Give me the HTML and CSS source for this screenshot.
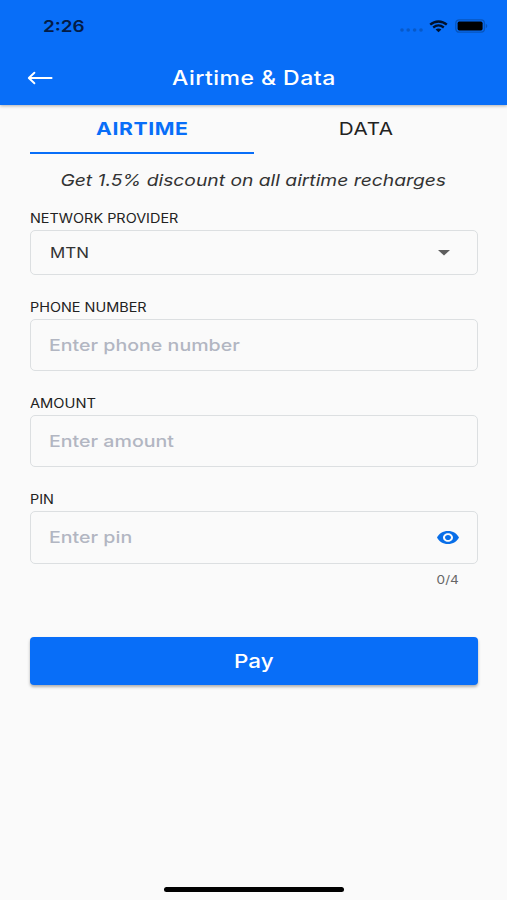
FILE: index.html
```html
<!DOCTYPE html>
<html lang="en">
<head>
<meta charset="utf-8">
<title>Airtime &amp; Data</title>
<link rel="stylesheet" href="styles.css">
</head>
<body>
<div class="screen">
  <header class="header">
    <div class="status">
      <span class="txt time">2:26</span>
      <div class="status-icons">
        <svg class="signal" width="24" height="4" viewBox="0 0 24 4"><circle cx="2" cy="2" r="1.8"/><circle cx="8.2" cy="2" r="1.8"/><circle cx="14.6" cy="2" r="1.8"/><circle cx="21" cy="2" r="1.8"/></svg>
        <svg class="wifi" width="19" height="13" viewBox="0 0 19 13"><path d="M1.2 4.7C6 .4 13 .4 17.8 4.7M4.2 7.5c3.2-2.6 7.4-2.6 10.6 0"/><path class="dot" d="M6.6 9.4c1.7-1.3 4.1-1.3 5.8 0L9.5 12.2z"/></svg>
        <svg class="battery" width="33" height="14" viewBox="0 0 33 14"><rect class="shell" x=".8" y=".8" width="28.6" height="12.4" rx="3.4"/><rect x="2.6" y="2.6" width="25" height="8.8" rx="1.6"/><path class="cap" d="M30.8 4.8c2 .8 2 3.6 0 4.4z"/></svg>
      </div>
    </div>
    <div class="appbar">
      <svg class="back" width="26" height="14" viewBox="0 0 26 14"><path d="M7.4 1.7 1.8 7 7.4 12.3M2 7H24.6"/></svg>
      <h1 class="txt title">Airtime &amp; Data</h1>
    </div>
  </header>
  <main class="content">
    <nav class="tabs">
      <div class="tab active"><span class="txt">AIRTIME</span></div>
      <div class="tab"><span class="txt">DATA</span></div>
    </nav>
    <p class="promo"><span class="txt">Get 1.5% discount on all airtime recharges</span></p>
    <div class="label"><span class="txt">NETWORK PROVIDER</span></div>
    <div class="field select"><span class="txt value">MTN</span>
      <svg class="caret" width="12" height="6" viewBox="0 0 12 6"><path d="M0 0h12L6 5.6z"/></svg>
    </div>
    <div class="label"><span class="txt">PHONE NUMBER</span></div>
    <div class="field"><span class="txt hint">Enter phone number</span></div>
    <div class="label"><span class="txt amount">AMOUNT</span></div>
    <div class="field"><span class="txt hint">Enter amount</span></div>
    <div class="label"><span class="txt">PIN</span></div>
    <div class="field"><span class="txt hint">Enter pin</span>
      <svg class="eye" width="22" height="13" viewBox="1 4.5 22 15" preserveAspectRatio="none"><path d="M12 4.5C7 4.5 2.73 7.61 1 12c1.73 4.39 6 7.5 11 7.5s9.27-3.11 11-7.5c-1.73-4.39-6-7.5-11-7.5zM12 17c-2.76 0-5-2.24-5-5s2.24-5 5-5 5 2.24 5 5-2.24 5-5 5zm0-8c-1.66 0-3 1.34-3 3s1.34 3 3 3 3-1.34 3-3-1.34-3-3-3z"/></svg>
    </div>
    <div class="counter"><span class="txt">0/4</span></div>
    <div class="pay"><span class="txt">Pay</span></div>
  </main>
  <div class="home"></div>
</div>
</body>
</html>
```
FILE: styles.css
```css
* { box-sizing: border-box; }
body { margin: 0; background: #fafafa; font-family: Inter, "Liberation Sans", sans-serif; color: #222; }
.screen { width: 507px; height: 900px; display: flex; flex-direction: column; background: #fafafa; overflow: hidden; }
.txt { display: inline-block; white-space: nowrap; transform: scaleX(var(--sx, 1.18)); transform-origin: left center; }
svg { display: block; flex: none; }

.header { height: 105px; flex: none; background: #086ef8; box-shadow: 0 1px 3px rgba(0, 0, 0, .3); }
.status { height: 52px; padding: 0 19px 0 43px; display: flex; align-items: center; justify-content: space-between; }
.time { font-size: 16px; font-weight: 600; line-height: 20px; color: #031b45; }
.status-icons { display: flex; align-items: center; }
.signal { fill: #0759c9; margin: 8px 5px 0 0; }
.wifi { fill: none; stroke: #01112c; stroke-width: 2.3; margin-right: 7px; }
.wifi .dot { fill: #01112c; stroke: none; }
.battery { fill: #000; }
.battery .shell { fill: none; stroke: #0755bd; stroke-width: 1.3; }
.battery .cap { fill: #0755bd; }
.appbar { height: 51px; padding-left: 27px; display: flex; align-items: center; }
.back { fill: none; stroke: #fff; stroke-width: 1.9; stroke-linecap: round; stroke-linejoin: round; }
.title { margin: 0 0 0 119px; font-size: 19.5px; font-weight: 500; line-height: 24px; color: #fff; letter-spacing: .4px; --sx: 1.18; }

.content { padding: 0 29.5px; flex: 1; }
.tabs { height: 48.5px; display: flex; }
.tab { flex: 1; text-align: center; line-height: 47px; font-size: 17.5px; color: #222; letter-spacing: .5px; }
.tab .txt, .promo .txt, .pay .txt { transform-origin: center; }
.tab + .tab { padding-left: 1px; }
.tab.active { padding-left: 1px; color: #086ef8; font-weight: 700; border-bottom: 2px solid #086ef8; --sx: 1.21; }
.promo { margin: 13.5px 0 0; height: 27px; line-height: 27px; text-align: center; font-size: 16.5px; font-style: italic; color: #333; --sx: 1.167; }
.label { height: 21px; padding-left: .5px; line-height: 21px; font-size: 12.7px; color: #222; --sx: 1.137; }
.amount { --sx: 1.155; }
.field { height: 52.5px; margin-top: .8px; padding: 0 18px; display: flex; align-items: center; justify-content: space-between; border: 1px solid #dcdfe1; border-radius: 5px; }
.select { height: 45px; padding-left: 19px; }
.value { font-size: 14.2px; color: #333; --sx: 1.19; }
.caret { fill: #5d5d5d; margin: 1px 9px 0 0; }
.hint { font-size: 16.5px; color: #b2b6c2; font-weight: 500; --sx: 1.187; }
.eye { fill: #086ee8; }
.promo + .label { margin-top: 14px; }
.field + .label { margin-top: 22px; }
.select + .label { margin-top: 22px; }
.counter { height: 20px; margin-top: 6px; line-height: 20px; padding-right: 19px; text-align: right; font-size: 11.5px; color: #666; }
.counter .txt { transform-origin: right center; }
.pay { height: 48.5px; margin-top: 47px; border-radius: 4px; background: #086ef8; color: #fff; text-align: center; line-height: 50px; font-size: 19px; font-weight: 500; box-shadow: 0 2px 3px rgba(0, 0, 0, .3); }
.home { width: 180px; height: 5px; flex: none; margin: 0 auto 8px; border-radius: 3px; background: #000; }
```
